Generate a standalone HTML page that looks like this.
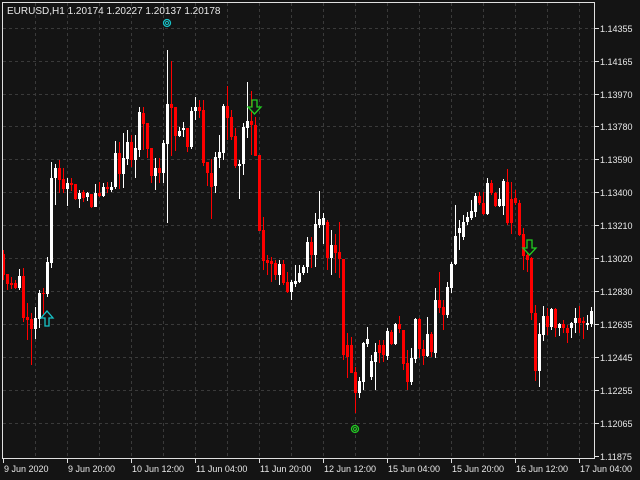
<!DOCTYPE html>
<html><head><meta charset="utf-8"><style>
html,body{margin:0;padding:0;background:#141414;width:640px;height:480px;overflow:hidden}
svg{display:block}
text{font-family:"Liberation Sans",sans-serif;fill:#e8e8e8}
</style></head><body>
<svg id="c" width="640" height="480" xmlns="http://www.w3.org/2000/svg">
<rect width="640" height="480" fill="#141414"/>
<g id="grid" stroke="#3a3a3a" stroke-width="1" stroke-dasharray="3,3"></g>
<g id="bars"></g>
<g fill="none" stroke="#e0e0e0" stroke-width="1">
<line x1="2.5" y1="2" x2="2.5" y2="458"/>
<line x1="2" y1="2.5" x2="594" y2="2.5"/>
<line x1="594.5" y1="2" x2="594.5" y2="459"/>
<line x1="2" y1="458.5" x2="595" y2="458.5"/>
</g>
<g id="ticks" stroke="#e0e0e0" stroke-width="1"></g>
<g id="labels"></g>
<text x="7" y="14" font-size="10">EURUSD,H1  1.20174 1.20227 1.20137 1.20178</text>
<circle cx="167" cy="23" r="3.5" fill="none" stroke="#17c3c8" stroke-width="1.3"/>
<circle cx="167" cy="23" r="1.5" fill="none" stroke="#17c3c8" stroke-width="1"/>
<circle cx="355" cy="429" r="3.5" fill="none" stroke="#22cc22" stroke-width="1.3"/>
<circle cx="355" cy="429" r="1.5" fill="none" stroke="#22cc22" stroke-width="1"/>
<polygon points="45,326 45,318 41,318 47,311 53,318 49,318 49,326" fill="#141414" stroke="#17c3c8" stroke-width="1.3"/>
<polygon points="252,100 257,100 257,107 261,107 254.5,114 248,107 252,107" fill="#141414" stroke="#22cc22" stroke-width="1.3"/>
<polygon points="527,240 532,240 532,248 536,248 529.5,255 523,248 527,248" fill="#141414" stroke="#22cc22" stroke-width="1.3"/>
</svg>
<script>
var D=[[254,275,250,280,0],[274,284,274,290,0],[283,285,277,289,0],[283,288,280,289,0],[276,288,269,290,1],[276,318,268,322,0],[317,320,303,340,0],[319,329,313,365,0],[318,329,307,339,1],[293,319,290,328,1],[293,294,288,315,0],[262,294,257,297,1],[178,263,162,268,1],[168,178,164,205,1],[168,180,160,193,0],[179,189,168,193,0],[183,189,178,206,1],[183,185,178,191,0],[184,199,184,200,0],[193,199,190,208,1],[192,198,190,202,0],[193,197,192,201,1],[194,207,194,208,0],[193,207,184,207,1],[193,196,182,197,0],[187,196,183,197,1],[187,189,182,193,0],[187,190,182,192,1],[153,187,141,189,1],[153,174,142,189,0],[158,174,133,188,1],[142,159,130,165,1],[142,160,135,167,0],[148,160,135,178,1],[112,150,107,157,1],[113,124,107,150,0],[123,149,123,158,0],[148,176,148,183,0],[168,176,158,190,1],[168,173,158,183,0],[143,173,140,183,1],[104,144,50,223,1],[104,108,61,156,0],[107,136,107,151,0],[131,136,127,137,1],[128,130,122,137,1],[128,147,128,152,0],[111,147,107,149,1],[107,111,97,120,1],[107,111,100,118,0],[110,163,100,166,0],[162,173,162,186,0],[173,187,159,219,0],[157,186,152,193,1],[152,158,135,168,1],[106,153,104,160,1],[106,118,86,140,0],[117,137,110,140,0],[136,166,128,168,0],[164,166,160,199,1],[127,164,123,175,1],[121,128,82,138,1],[121,125,91,155,0],[125,156,117,156,0],[155,231,155,231,0],[230,261,217,270,0],[260,263,255,275,0],[261,264,257,282,0],[263,275,260,280,0],[264,275,260,285,1],[264,283,260,285,0],[282,292,272,293,0],[282,292,280,300,1],[281,284,265,287,1],[273,282,265,283,1],[267,273,265,275,1],[242,267,237,273,1],[242,255,237,268,0],[224,255,213,267,1],[219,225,191,228,1],[218,225,213,244,1],[222,258,220,270,0],[245,258,230,275,1],[245,253,234,273,0],[252,259,222,278,0],[259,355,259,360,0],[345,357,333,378,0],[345,373,337,373,0],[372,393,367,413,0],[381,393,377,398,1],[343,382,342,390,1],[339,344,327,347,1],[361,377,355,380,1],[352,362,343,390,1],[345,353,340,363,0],[345,355,340,362,0],[331,356,328,360,1],[332,344,330,345,0],[324,344,323,345,1],[324,329,316,333,0],[330,364,330,370,0],[363,382,350,390,0],[358,382,348,385,1],[319,359,318,363,1],[319,349,318,358,0],[349,356,340,365,0],[334,356,317,357,1],[334,352,332,357,0],[300,353,288,358,1],[300,308,272,313,0],[307,315,300,330,0],[287,315,282,318,1],[264,288,262,293,1],[236,264,205,265,1],[228,233,220,250,1],[222,237,215,240,1],[217,222,212,225,1],[211,218,200,220,1],[196,212,193,217,1],[196,203,192,205,0],[203,214,192,215,0],[183,214,178,215,1],[183,193,180,195,0],[193,206,192,207,0],[199,206,188,207,1],[181,206,179,215,1],[182,223,169,225,0],[199,223,182,234,0],[198,203,190,205,0],[203,235,200,236,0],[234,256,228,270,0],[255,260,243,272,0],[258,313,257,320,0],[313,371,305,381,0],[334,371,323,387,1],[316,335,306,341,1],[316,327,308,335,0],[309,327,308,330,1],[309,328,308,337,0],[324,328,323,336,1],[324,328,320,333,0],[328,333,325,343,0],[323,328,322,338,1],[318,323,308,333,1],[318,323,306,333,0],[321,323,317,339,0],[323,325,315,330,1],[311,324,307,327,1]];
var ns="http://www.w3.org/2000/svg";
function el(p,t,a){var e=document.createElementNS(ns,t);for(var k in a)e.setAttribute(k,a[k]);p.appendChild(e);return e;}
var g=document.getElementById('grid'),b=document.getElementById('bars'),tk=document.getElementById('ticks'),lb=document.getElementById('labels');
var prices=["1.14355","1.14165","1.13970","1.13780","1.13590","1.13400","1.13210","1.13020","1.12830","1.12635","1.12445","1.12255","1.12065","1.11875"];
for(var i=0;i<14;i++){var y=Math.round(27.8+i*32.9)+0.5;
 if(i<13)el(g,'line',{x1:3,y1:y,x2:594,y2:y});
 el(tk,'line',{x1:595,y1:y,x2:599,y2:y});
 var t=el(lb,'text',{x:600,y:y+3.5,'font-size':'9'});t.textContent=prices[i];}
for(var k=1;k<=18;k++){var x=3+32*k+0.5;el(g,'line',{x1:x,y1:3,x2:x,y2:458});}
var times=["9 Jun 2020","9 Jun 20:00","10 Jun 12:00","11 Jun 04:00","11 Jun 20:00","12 Jun 12:00","15 Jun 04:00","15 Jun 20:00","16 Jun 12:00","17 Jun 04:00"];
for(var k=0;k<10;k++){var x=3+64*k;el(tk,'line',{x1:x+0.5,y1:459,x2:x+0.5,y2:463});
 var t=el(lb,'text',{x:x+(k==0?1:1),y:472,'font-size':'9'});t.textContent=times[k];}
for(var i=0;i<D.length;i++){var d=D[i],c=d[4]?'#ffffff':'#ff0000',x=4*i+2;
 el(b,'rect',{x:x+1,y:d[2],width:1,height:Math.max(1,d[3]-d[2]),fill:c});
 el(b,'rect',{x:x,y:d[0],width:3,height:Math.max(1,d[1]-d[0]),fill:c});}
</script>
</body></html>
